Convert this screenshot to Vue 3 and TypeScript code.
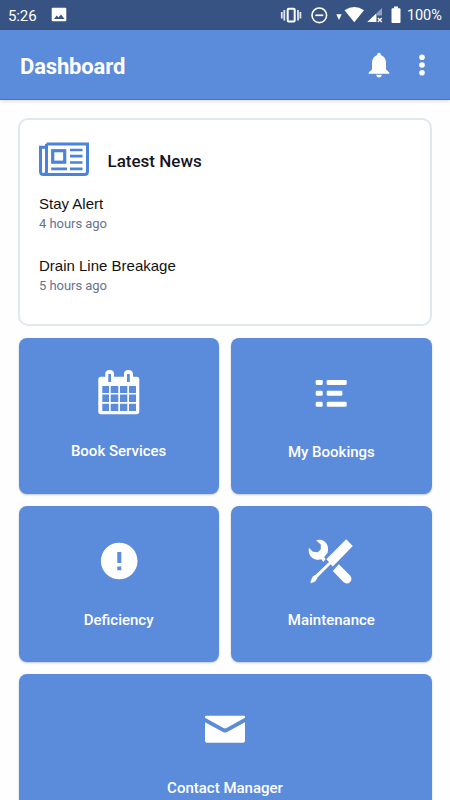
<script setup lang="ts">
interface NewsItem { title: string; age: string }
interface Tile { id: string; label: string; wide?: boolean }

const news: NewsItem[] = [
  { title: 'Stay Alert', age: '4 hours ago' },
  { title: 'Drain Line Breakage', age: '5 hours ago' },
]
const tiles: Tile[] = [
  { id: 'services', label: 'Book Services' },
  { id: 'bookings', label: 'My Bookings' },
  { id: 'deficiency', label: 'Deficiency' },
  { id: 'maintenance', label: 'Maintenance' },
  { id: 'contact', label: 'Contact Manager', wide: true },
]
</script>

<template>
  <div class="screen">
    <div class="status">
      <span class="clock">5:26</span>
      <svg class="photo" width="16" height="16" viewBox="0 0 16 16">
        <path fill="#fff" fill-rule="evenodd" d="M1.7 .7h12.6q1 0 1 1v11.6q0 1-1 1H1.7q-1 0-1-1V1.700q0-1 1-1ZM3 12h10.500L10 7.500 7.500 10.500 5.700 8.600Z" />
      </svg>
      <svg class="indicators" width="126" height="30" viewBox="0 0 126 30">
        <g fill="none" stroke="#fff">
          <rect x="7.700" y="8.800" width="7" height="12.800" rx="1" stroke-width="2" />
          <path stroke-width="1.800" d="M4.300 10v10.500M1.800 12v6.500M18 10v10.500M20.400 12v6.500" opacity=".85" />
          <circle cx="39.300" cy="15.300" r="7.300" stroke-width="1.600" />
          <path d="M35.300 15.300h8" stroke-width="1.700" />
        </g>
        <g fill="#fff">
          <path d="M56.300 14.200h5.400L59 20Z" />
          <path d="M64.500 10.200q10-6.500 19.500 0L74.300 22.300Z" />
          <path opacity=".45" d="M102 8v7.500h-5V22H87.500Z" />
          <path d="M96 13.700V22H87.300Z" />
          <path d="M97.800 18l4 4m0-4l-4 4" stroke="#fff" stroke-width="1.300" />
          <path d="M114 6.500h4v1.800h1.500q1 0 1 1V22q0 1-1 1h-7q-1 0-1-1V9.300q0-1 1-1h1.500Z" />
        </g>
      </svg>
      <span class="charge">100%</span>
    </div>

    <header class="bar">
      <h1>Dashboard</h1>
      <svg class="bell" width="22" height="26" viewBox="0 0 22 26">
        <path fill="#fff" d="M9.200 2.500Q9.200.700 11 .700t1.800 1.800v.500Q18 4.800 18 11v6.500l3.300 3v1.200H.700v-1.200l3.300-3V11Q4 4.800 9.200 3ZM8 22.800h6q-.700 2.700-3 2.700t-3-2.700Z" />
      </svg>
      <svg class="more" width="8" height="24" viewBox="0 0 8 24">
        <g fill="#fff"><circle cx="4" cy="4.200" r="2.800" /><circle cx="4" cy="12" r="2.800" /><circle cx="4" cy="19.700" r="2.800" /></g>
      </svg>
    </header>

    <main>
      <section class="news">
        <div class="news-head">
          <svg width="50" height="36" viewBox="0 0 50 36" fill="none" stroke="#4a84da">
            <path stroke-width="3" d="M7.500 3h41v27.500q0 3-3 3H4.600q-3.100 0-3.100-3V6.200h6M7.500 3v27.500q0 3-3 3" />
            <rect x="13.700" y="9.700" width="12" height="11.500" stroke-width="3.200" />
            <path stroke-width="2.700" d="M12.200 27.800h15.800M31 9h12.500M31 15.200h12.500M31 21.500h12.500M31 27.800h12.500" />
          </svg>
          <h2>Latest News</h2>
        </div>
        <article v-for="item in news" :key="item.title">
          <p class="title">{{ item.title }}</p>
          <p class="age">{{ item.age }}</p>
        </article>
      </section>

      <nav class="tiles">
        <a v-for="tile in tiles" :key="tile.id" class="tile" :class="[tile.id, { wide: tile.wide }]">
          <svg width="48" height="48" viewBox="0 0 48 48" fill="#fff">
            <template v-if="tile.id === 'services'">
              <path fill-rule="evenodd" d="M6 7.700h4.300V5q0-4 4.400-4T19 5v2.700h10V5q0-4 4.400-4T38 5v2.700h3.500q2.800 0 2.800 2.800v32q0 2.800-2.800 2.800H6q-2.700 0-2.700-2.800v-32Q3.300 7.700 6 7.700Z" />
              <g fill="#5b8bdb">
                <path d="M13.300 5h2.700v8h-2.700ZM32 5h2.800v8H32Z" />
                <path d="M7.300 17H14v7H7.300ZM15.700 17h7.600v7h-7.600ZM25 17h7.300v7H25ZM34 17h7v7h-7Z" />
                <path d="M7.300 25.600H14V33H7.300ZM15.700 25.600h7.600V33h-7.600ZM25 25.600h7.300V33H25ZM34 25.600h7V33h-7Z" />
                <path d="M7.300 34.700H14v7.300H7.300ZM15.700 34.700h7.600v7.300h-7.600ZM25 34.700h7.300v7.300H25ZM34 34.700h7v7.300h-7Z" />
              </g>
            </template>
            <template v-else-if="tile.id === 'bookings'">
              <rect x="8.700" y="11" width="7" height="5" rx="1.300" /><rect x="19.700" y="11" width="20" height="5" rx="1.300" />
              <rect x="8.700" y="21.800" width="7" height="5" rx="1.300" /><rect x="19.700" y="21.800" width="15.700" height="5" rx="1.300" />
              <rect x="8.700" y="32.800" width="7" height="5" rx="1.300" /><rect x="19.700" y="32.800" width="20" height="5" rx="1.300" />
            </template>
            <template v-else-if="tile.id === 'deficiency'">
              <circle cx="24.200" cy="24" r="18.300" />
              <path fill="#5b8bdb" d="M22.300 15h4v11h-4ZM22.300 29.600h4v3.700h-4Z" />
            </template>
            <template v-else-if="tile.id === 'maintenance'">
              <path d="M9.200 3.500C14 1.500 19.500 4.500 20.800 9.500Q21.500 13 20.500 16L17 20.300 18.600 21.800 16.500 25 14.300 22.300C8.500 24 3.500 21 2 16Q1.200 13 2 10.700L5.800 14.800 10.800 15.300 13.800 12.300V7.500Z" />
              <path d="M31.800 27.300 42.800 38.200Q46 42 43 45.200 39.700 48 36.200 44.700L25.800 34Z" />
              <path d="M39.200 2.200 45.800 9 25.800 29.600 23.700 27.300 10.700 40.300 8.500 44.300 4.200 46.300 3.300 45 5.700 39.500 9 37.500 22 25 19.300 22.300Z" />
            </template>
            <template v-else>
              <path d="M5 10.700h38q1 0 1 1v1L25.500 23q-1.500 .8-3 0L4 12.700v-1q0-1 1-1Z" />
              <path d="M4 17.300 22 27q2 1 4 0l18-9.700v18.500q0 2-2 2H6q-2 0-2-2Z" />
            </template>
          </svg>
          <span>{{ tile.label }}</span>
        </a>
      </nav>
    </main>
  </div>
</template>

<style>
body { margin: 0; overflow: hidden; background: #fefefe; }
</style>

<style scoped>
* { box-sizing: border-box; }
.screen { height: 800px; overflow: hidden; font-family: Roboto, "Liberation Sans", sans-serif; background: #fefefe; }
.status { display: flex; align-items: center; height: 30px; padding: 0 7px 0 8px; color: #fff; background: #375383; }
.clock { width: 43px; font-size: 15px; line-height: 20px; letter-spacing: -.1px; padding-top: 1px; }
.indicators { margin-left: auto; margin-right: 1px; }
.charge { width: 36px; font-size: 14.500px; line-height: 20px; padding-top: 2px; letter-spacing: -.1px; }
.bar { display: flex; align-items: center; height: 70px; padding: 0 24px 0 20px; color: #fff; background: #5b8bdb; border-bottom: 1px solid #3d78cc; box-shadow: 0 1px 4px rgba(0, 0, 0, .16); }
h1 { margin: 4px auto 0 0; font-size: 22px; line-height: 26px; font-weight: 700; letter-spacing: -.15px; }
.bell { margin-right: 28px; }
.more { margin-top: 1px; }
main { padding: 18px 18px 0; }
.news { height: 208px; padding: 21px 19px 0; border: 2px solid #e1e7ed; border-radius: 10px; background: #fff; }
.news-head { display: flex; gap: 18.500px; height: 38px; }
h2 { margin: 8px 0 0; font-size: 17px; line-height: 24px; font-weight: 500; color: #15151f; }
article { height: 61.500px; padding-top: 15px; }
article p { margin: 0; white-space: nowrap; }
.title { font-family: "Liberation Sans", sans-serif; font-size: 15px; line-height: 20px; color: #111; }
.age { font-size: 13px; line-height: 19px; color: #68738f; letter-spacing: -.05px; }
.tiles { display: grid; grid-template-columns: 1fr 1fr; grid-auto-rows: 155.500px; gap: 12.500px; padding: 12px .5px 0; }
.tile { display: flex; flex-direction: column; align-items: center; padding-top: 31px; border-radius: 8px; color: #fff; background: #5b8bdb; box-shadow: 0 1px 2px rgba(40, 70, 120, .3); }
.tile span { margin-top: 25px; font-size: 15px; line-height: 20px; font-weight: 500; }
.services span { margin-top: 24px; }
.wide { grid-column: 1 / -1; }
</style>
